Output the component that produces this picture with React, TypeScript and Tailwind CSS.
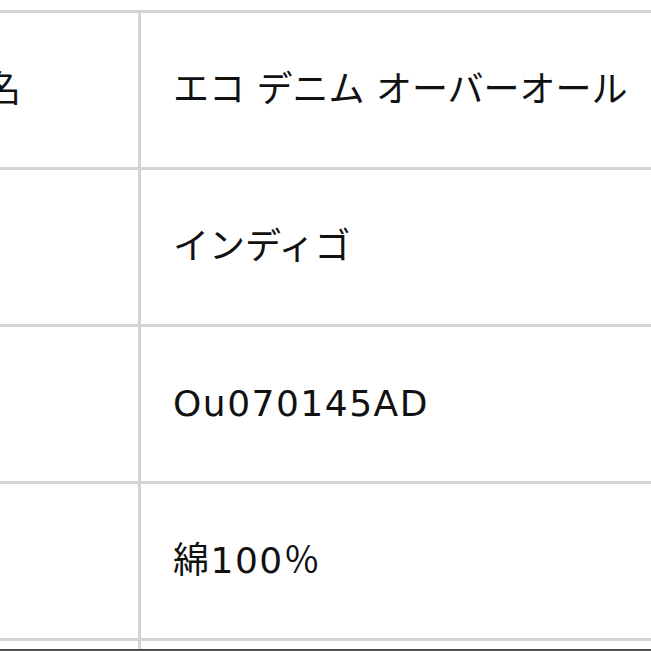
const rows = [
  { label: "商品名", value: "エコ デニム オーバーオール", latin: false },
  { label: "色", value: "インディゴ", latin: false },
  { label: "品番", value: "Ou070145AD", latin: true },
  { label: "素材", value: "綿100％", latin: true },
  { label: "", value: "", latin: false },
];

export default function App() {
  return (
    <div className="w-[651px] h-[651px] flex flex-col bg-white overflow-hidden">
      <div className="flex-1 overflow-hidden pt-[10px]">
        <div
          className="-ml-[119px] w-[770px] text-[36px] leading-none text-[#111]"
          style={{ fontFamily: '"DejaVu Sans", "Noto Sans CJK JP", sans-serif' }}
        >
          {rows.map((row, i) => (
            <div
              key={i}
              className="grid grid-cols-[260px_1fr] h-[157px] border-t-[3px] border-[#d3d3d3]"
            >
              <div className="flex items-center pl-8 border-r-[3px] border-[#d3d3d3] whitespace-nowrap">
                {row.label}
              </div>
              <div
                className={
                  row.latin
                    ? "flex items-center pl-8 whitespace-nowrap tracking-[1.5px]"
                    : "flex items-center pl-8 whitespace-nowrap"
                }
              >
                {row.value}
              </div>
            </div>
          ))}
        </div>
      </div>
      <div className="h-[2px] bg-[#4d4d4d]" />
    </div>
  );
}
